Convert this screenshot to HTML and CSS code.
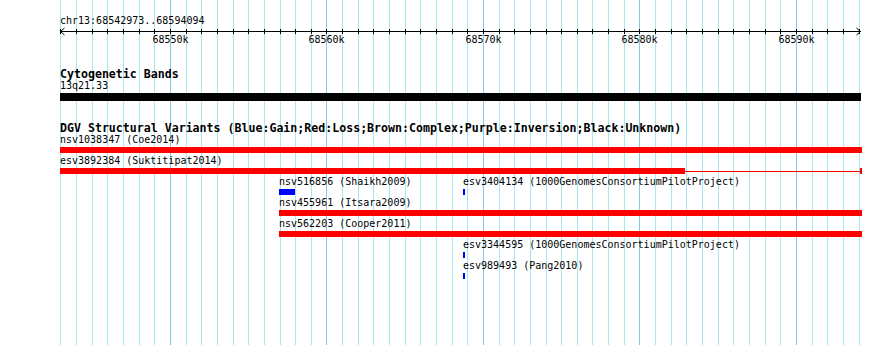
FILE: index.html
```html
<!DOCTYPE html>
<html lang="en">
  <head>
    <meta charset="UTF-8" />
    <title>chr13:68542973..68594094</title>
    <link rel="stylesheet" href="styles.css">
  </head>
  <body>
    <div class="browser">
      <svg class="grid" id="grid" width="890" height="345"></svg>

      <!-- ruler -->
      <div class="ruler">
        <div class="ruler-title">chr13:68542973..68594094</div>
        <svg class="axis" id="axis" width="890" height="22"></svg>
      </div>

      <!-- cytogenetic bands -->
      <div class="track cyto">
        <div class="track-title pad">Cytogenetic Bands</div>
        <div class="label pad">13q21.33</div>
        <div class="band"></div>
      </div>

      <!-- DGV -->
      <div class="track dgv">
        <div class="track-title pad">DGV Structural Variants (Blue:Gain;Red:Loss;Brown:Complex;Purple:Inversion;Black:Unknown)</div>
        <div class="row">
          <div class="feature" style="left:60px;width:802px">
            <div class="label">nsv1038347 (Coe2014)</div>
            <div class="bar loss"></div>
          </div>
        </div>
        <div class="row">
          <div class="feature" style="left:60px;width:802px">
            <div class="label">esv3892384 (Suktitipat2014)</div>
            <div class="bar split">
              <span class="block" style="width:625px"></span>
              <span class="line"></span>
              <span class="block" style="width:2px"></span>
            </div>
          </div>
        </div>
        <div class="row">
          <div class="feature" style="left:279px;width:16px">
            <div class="label">nsv516856 (Shaikh2009)</div>
            <div class="bar gain"></div>
          </div>
          <div class="feature" style="left:463px;width:2px">
            <div class="label">esv3404134 (1000GenomesConsortiumPilotProject)</div>
            <div class="bar gain"></div>
          </div>
        </div>
        <div class="row">
          <div class="feature" style="left:279px;width:583px">
            <div class="label">nsv455961 (Itsara2009)</div>
            <div class="bar loss"></div>
          </div>
        </div>
        <div class="row">
          <div class="feature" style="left:279px;width:583px">
            <div class="label">nsv562203 (Cooper2011)</div>
            <div class="bar loss"></div>
          </div>
        </div>
        <div class="row">
          <div class="feature" style="left:463px;width:2px">
            <div class="label">esv3344595 (1000GenomesConsortiumPilotProject)</div>
            <div class="bar gain"></div>
          </div>
        </div>
        <div class="row">
          <div class="feature" style="left:463px;width:2px">
            <div class="label">esv989493 (Pang2010)</div>
            <div class="bar gain"></div>
          </div>
        </div>
      </div>
    </div>

    <script src="script.js"></script>
  </body>
</html>
```

FILE: styles.css
```css
body {
  margin: 0;
  background: #fff;
}
.browser {
  position: relative;
  width: 890px;
  height: 345px;
  overflow: hidden;
  font-family: "DejaVu Sans Mono", "Liberation Mono", monospace;
  font-size: 10px;
  color: #000;
}
.grid {
  position: absolute;
  left: 0;
  top: 0;
}
.ruler,
.track {
  position: relative;
}
.ruler-title {
  padding: 16px 0 1px 60px;
  line-height: 10px;
}
.axis {
  display: block;
}
.pad {
  padding-left: 60px;
}
.track-title {
  font-weight: bold;
  font-size: 11.6px;
  line-height: 13px;
  white-space: nowrap;
}
.label {
  line-height: 10px;
  white-space: nowrap;
}
.cyto {
  margin-top: 19px;
}
.band {
  margin: 2px 0 0 60px;
  width: 801px;
  height: 8px;
  background: #000;
}
.dgv {
  margin-top: 21px;
}
.row {
  position: relative;
  height: 21px;
}
.feature {
  position: absolute;
  top: 0;
}
.bar {
  margin-top: 2px;
  height: 6px;
}
.loss {
  background: #ff0000;
}
.gain {
  background: #0000ff;
}
.split {
  display: flex;
}
.split .block {
  height: 6px;
  background: #ff0000;
}
.split .line {
  flex: 1;
  height: 1px;
  align-self: center;
  background: #ff0000;
}
```

FILE: script.js
```js
var start = 68542973;
var end = 68594094;
var x0 = 60;
var x1 = 860;

function px(bp) {
  return x0 + (bp - start) * (x1 - x0) / (end - start);
}

var ns = "http://www.w3.org/2000/svg";
var grid = document.getElementById("grid");
var axis = document.getElementById("axis");

function el(parent, name, attrs) {
  var node = document.createElementNS(ns, name);
  for (var k in attrs) node.setAttribute(k, attrs[k]);
  parent.appendChild(node);
  return node;
}

// grid lines + ticks every 1kb
for (var k = Math.ceil(start / 1000); k * 1000 <= end; k++) {
  var x = Math.round(px(k * 1000));
  var major = k % 10 == 0;
  el(grid, "rect", {
    x: x, y: 0, width: 1, height: 345,
    fill: major ? "#86c8ea" : "#a6e8ef",
    "shape-rendering": "crispEdges"
  });
  el(axis, "rect", { x: x, y: 2, width: 1, height: 5, fill: "#000", "shape-rendering": "crispEdges" });
  if (major) {
    var t = el(axis, "text", {
      x: x + 0.5, y: 16, "text-anchor": "middle",
      "font-family": "DejaVu Sans Mono, monospace", "font-size": 10
    });
    t.textContent = k + "k";
  }
}

// axis line and arrows
el(axis, "rect", { x: x0, y: 4, width: x1 - x0 + 1, height: 1, fill: "#000", "shape-rendering": "crispEdges" });
el(axis, "polyline", { points: "64.5,1 60.5,4.5 64.5,8", fill: "none", stroke: "#000", "stroke-width": 1 });
el(axis, "polyline", { points: "856.5,1 860.5,4.5 856.5,8", fill: "none", stroke: "#000", "stroke-width": 1 });
```
